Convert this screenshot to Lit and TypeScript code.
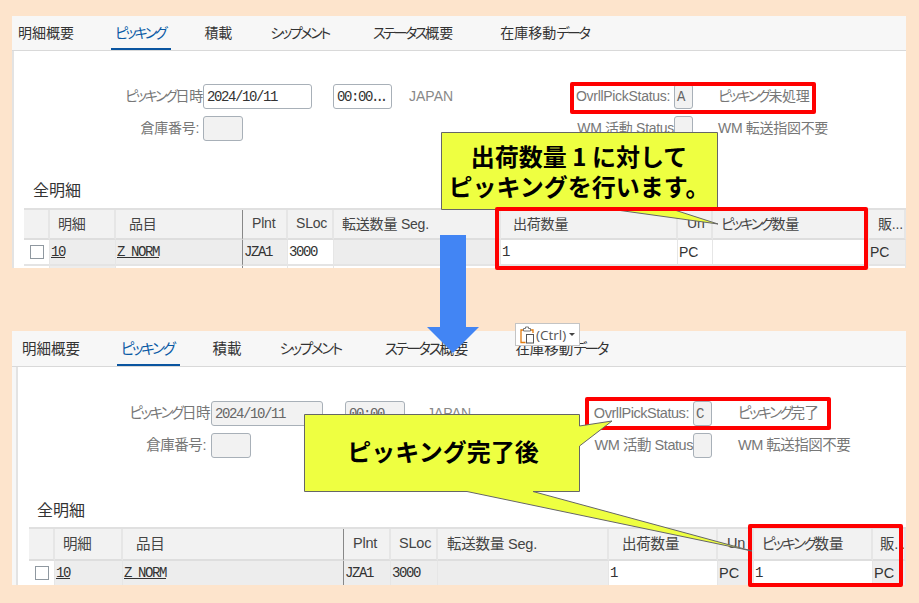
import { LitElement, html, css, svg } from "lit";
import { customElement, property } from "lit/decorators.js";

interface Col { w: number; head: string; pad: number; val?: string; link?: boolean; mono?: boolean; shade: boolean; next: boolean; frozen?: boolean; check?: boolean; }
interface Cfg {
  variant: string; active: string; date: string; time: string; timeMore: boolean; dateOff: boolean;
  status: string; statusText: string; cols: Col[];
}

const TABS = ["明細概要", "ピッキング", "積載", "シップメント", "ステータス概要", "在庫移動データ"];

const cols = (w: number[], p: number[], sloc: boolean, un: boolean, qty: string, pick: string): Col[] => [
  { w: w[0], head: "", pad: 0, check: true, shade: false, next: false },
  { w: w[1], head: "明細", pad: p[0], val: "10", link: true, mono: true, shade: true, next: true },
  { w: w[2], head: "品目", pad: p[1], val: "Z_NORM", link: true, mono: true, shade: true, next: false, frozen: true },
  { w: w[3], head: "Plnt", pad: p[2], val: "JZA1", mono: true, shade: true, next: false },
  { w: w[4], head: "SLoc", pad: p[3], val: "3000", mono: true, shade: sloc, next: false },
  { w: w[5], head: "転送数量 Seg.", pad: p[4], shade: true, next: false },
  { w: w[6], head: "出荷数量", pad: p[5], val: qty, mono: true, shade: false, next: false },
  { w: w[7], head: "Un", pad: p[6], val: "PC", shade: un, next: false },
  { w: w[8], head: "ピッキング数量", pad: p[7], val: pick, mono: true, shade: false, next: false },
  { w: w[9], head: "販...", pad: p[8], val: "PC", shade: true, next: false },
];

const TOP: Cfg = {
  variant: "p1", active: "ピッキング", date: "2024/10/11", time: "00:00", timeMore: true, dateOff: false,
  status: "A", statusText: "ピッキング未処理",
  cols: cols([26, 66, 127, 45, 46, 167, 177, 35, 156, 37], [8, 13, 9, 8, 8, 12, 9, 8, 9], false, false, "1", ""),
};
const BOTTOM: Cfg = {
  variant: "p2", active: "ピッキング", date: "2024/10/11", time: "00:00", timeMore: false, dateOff: true,
  status: "C", statusText: "ピッキング完了",
  cols: cols([26, 68, 221, 47, 47, 171, 109, 36, 119, 33], [8, 13, 9, 8, 9, 13, 9, 8, 7], true, true, "1", "1"),
};

/* Katakana is set tighter than the rest, as in the reference's UI font. */
const jp = (text: string) =>
  text.split(/([\u30A0-\u30FF]+)/).map((part, i) => (i % 2 ? html`<span class="ka">${part}</span>` : part));

@customElement("detail-panel")
export class DetailPanel extends LitElement {
  @property({ attribute: false }) cfg: Cfg = TOP;

  static styles = css`
    :host { display: block; overflow: hidden; background: #f7f7f7; color: #444;
      font-family: "Liberation Sans", "Noto Sans CJK JP", sans-serif; font-size: 14px; }
    .ka { font-feature-settings: "palt"; letter-spacing: -2.3px; }
    .tabs { display: flex; background: #f7f7f7; border-bottom: 1px solid #d9d9d9; box-sizing: border-box; gap: 33px; padding-left: 2px; }
    .tab { padding: 0 4px; height: 100%; display: flex; align-items: center; box-sizing: border-box; color: #333; white-space: nowrap; border-bottom: 2px solid transparent; margin-bottom: -1px; }
    .tab.on { color: #0a5aa5; border-bottom-color: #0a55a0; padding-right: 6px; }
    .tab:nth-child(3) { margin-left: -4px; }
    .tab:nth-child(4) { margin-left: -3px; }
    .tab:nth-child(5) { margin-left: 3px; }
    .tab:nth-child(6) { margin-left: 6px; }
    .p1 .tabs { height: 35px; }
    .p2 .tabs { height: 36px; padding-left: 6px; }
    .p2 { font-size: 14.5px; }
    .body { border-left: 2px solid #e3e3e3; background: #fff; height: 240px; }
    .p1 .body { padding: 33px 0 0 10px; }
    .p2 .body { margin-left: 4px; padding: 34px 0 0 11px; }
    .form { display: grid; row-gap: 7px; align-items: center; color: #777; margin-left: -10px; }
    .p1 .form { grid-template-columns: 189px 109px 21px 59px 17px 131px 134px 19px 25px 1fr; grid-auto-rows: 25px; }
    .p2 .form { grid-template-columns: 193px 112px 22px 60px 22px 110px 156px 19px 26px 1fr; grid-auto-rows: 25px; margin-left: -11px; }
    .label { text-align: right; white-space: nowrap; letter-spacing: -0.3px; line-height: 20px; position: relative; top: -1px; }
    .p2 .label { letter-spacing: -0.45px; }
    .p2 .l1 { padding-right: 1px; }
    .p2 .l1.pr { padding-right: 5px; }
    .pr { padding-right: 4px; }
    .input { box-sizing: border-box; height: 25px; border: 1px solid #a8b0b8; border-radius: 3px; background: #fff; color: #333; padding: 0 3px; display: flex; align-items: center;
      font-family: "Liberation Mono", monospace; font-size: 14px; letter-spacing: -1.4px; white-space: nowrap; overflow: hidden; }
    .off { background: #f2f2f2; color: #666; }
    .short { width: 40px; }
    .dots { letter-spacing: -4px; margin-left: -1px; }
    .c2 { grid-column: 2; } .c4 { grid-column: 4; } .c6 { grid-column: 6; }
    .c7 { grid-column: 7; } .c8 { grid-column: 8; padding: 0 2px; } .c10 { grid-column: 10; }
    .l1 { grid-column: 1; }
    .note { white-space: nowrap; line-height: 20px; position: relative; top: -1px; letter-spacing: -0.3px; }
    .p2 .note { letter-spacing: -0.5px; }
    .jpn { color: #888; font-size: 14px; line-height: 20px; position: relative; top: -1px; }
    .heading { font-size: 16px; color: #333; line-height: 20px; }
    .p1 .heading { margin-top: 40px; margin-bottom: 7px; padding-left: 9px; }
    .p2 .heading { margin-top: 43px; margin-bottom: 6px; padding-left: 8px; }
    .grid { display: grid; border-top: 2px solid #e0e0e0; }
    .h { background: #f2f2f2; display: flex; align-items: center; border-right: 2px solid #e6e6e6; border-bottom: 2px solid #dedede; white-space: nowrap; overflow: hidden; color: #444; letter-spacing: -0.2px; box-sizing: content-box; }
    .p1 .h { height: 25px; padding-bottom: 3px; }
    .p2 .h { height: 27px; padding-bottom: 3px; }
    .d { height: 24px; display: flex; align-items: center; padding-left: 1px; border-right: 1px solid #e6e6e6; border-bottom: 2px solid #e4e4e4; background: #fff; color: #333; white-space: nowrap; overflow: hidden; }
    .shade { background: #ededed; }
    .n { height: 20px; background: #fff; border-right: 1px solid #e6e6e6; }
    .n.g { background: #ededed; }
    .frozen { border-right: 1px solid #888; }
    .mono { font-family: "Liberation Mono", monospace; letter-spacing: -1.4px; font-size: 14px; }
    .link { text-decoration: underline; }
    .box { width: 14px; height: 14px; box-sizing: border-box; border: 1px solid #8f98a0; background: #fff; margin-left: 5px; }
  `;

  render() {
    const c = this.cfg;
    const tpl = c.cols.map((x) => x.w + "px").join(" ");
    const off = c.dateOff ? "off" : "";
    return html`<div class=${c.variant}>
      <div class="tabs">
        ${TABS.map((t) => html`<div class="tab ${t === c.active ? "on" : ""}">${jp(t)}</div>`)}
      </div>
      <div class="body">
        <div class="form">
          <div class="label l1">${jp("ピッキング日時")}</div>
          <div class="input c2 ${off}">${c.date}</div>
          <div class="input c4 ${off}">${c.time}${c.timeMore ? html`<span class="dots">...</span>` : ""}</div>
          <div class="jpn c6">JAPAN</div>
          <div class="label c7 pr">OvrllPickStatus:</div>
          <div class="input c8 off">${c.status}</div>
          <div class="note c10">${jp(c.statusText)}</div>
          <div class="label l1 pr">倉庫番号:</div>
          <div class="input c2 off short"></div>
          <div class="label c7">WM 活動 Status</div>
          <div class="input c8 off"></div>
          <div class="note c10">WM 転送指図不要</div>
        </div>
        <div class="heading">全明細</div>
        <div class="grid" style="grid-template-columns:${tpl}">
          ${c.cols.map((x) => html`<div class="h ${x.frozen ? "frozen" : ""}" style="padding-left:${x.pad}px">${jp(x.head)}</div>`)}
          ${c.cols.map((x) => html`<div class="d ${x.shade ? "shade" : ""} ${x.frozen ? "frozen" : ""}">
            ${x.check ? html`<div class="box"></div>` : ""}
            ${x.val ? html`<span class="${x.mono ? "mono" : ""} ${x.link ? "link" : ""}">${x.val}</span>` : ""}
          </div>`)}
          ${c.cols.map((x) => html`<div class="n ${x.next ? "g" : ""} ${x.frozen ? "frozen" : ""}"></div>`)}
        </div>
      </div>
    </div>`;
  }
}

@customElement("app-root")
export class AppRoot extends LitElement {
  static styles = css`
    :host { display: block; position: relative; width: 919px; height: 603px; background: #fde4cc; overflow: hidden;
      font-family: "Noto Sans CJK JP", "Noto Sans", sans-serif; }
    .stack { display: flex; flex-direction: column; padding: 16px 13px 0 12px; }
    .top { height: 252px; }
    .bottom { height: 254px; margin-top: 63px; }
    .art { position: absolute; left: 0; top: 0; width: 919px; height: 603px; pointer-events: none; }
    .red { position: absolute; box-sizing: border-box; border: 4px solid #f00; border-radius: 2px; }
    .r1 { left: 570px; top: 82px; width: 246px; height: 32px; }
    .r2 { left: 495px; top: 207px; width: 373px; height: 63px; }
    .r3 { left: 585px; top: 397px; width: 246px; height: 33px; }
    .r4 { left: 748px; top: 524px; width: 155px; height: 63px; }
    .say { position: absolute; color: #000; font-weight: 700; font-size: 24px; line-height: 30px; text-align: center; white-space: nowrap; }
    .s1 { left: 441px; top: 141px; width: 276px; }
    .s2 { left: 304px; top: 436px; width: 278px; }
    .paste { position: absolute; left: 515px; top: 323px; width: 65px; height: 23px; box-sizing: border-box; background: #fff; border: 1px solid #c4c4c4;
      display: flex; align-items: center; gap: 2px; padding-left: 4px; font-family: "Open Sans", "Noto Sans", sans-serif; font-size: 13.5px; color: #555; }
    .caret { width: 0; height: 0; border-left: 3px solid transparent; border-right: 3px solid transparent; border-top: 3px solid #444; margin-left: 1px; }
  `;

  render() {
    return html`
      <div class="stack">
        <detail-panel class="top" .cfg=${TOP}></detail-panel>
        <detail-panel class="bottom" .cfg=${BOTTOM}></detail-panel>
      </div>
      <div class="red r3"></div>
      <div class="red r4"></div>
      <svg class="art" viewBox="0 0 919 603">
        ${svg`<path d="M440 235H466V327H479L453 353L427 327H440Z" fill="#4285f4"/>`}
        ${svg`<path d="M441.5 132.5H717.5V209.5H673L718 224L613 209.5H441.5Z" fill="#eeff41" stroke="#666" stroke-width="1"/>`}
        ${svg`<path d="M304.5 414.5H579.5V426L612 421L579.5 446V491.5H533L752 551L467 491.5H304.5Z" fill="#eeff41" stroke="#666" stroke-width="1"/>`}
      </svg>
      <div class="red r1"></div>
      <div class="red r2"></div>
      <div class="say s1">出荷数量 1 に対して<br />ピッキングを行います。</div>
      <div class="say s2">ピッキング完了後</div>
      <div class="paste">
        <svg width="14" height="18" viewBox="0 0 14 18">
          <path d="M3.5 4H1V16.5H5.5M10.5 4H13V7" fill="none" stroke="#e07b10" stroke-width="1.3"/>
          <path d="M3.5 5V2.5H5.5V1H8.5V2.5H10.5V5Z" fill="#fff" stroke="#777" stroke-width="1"/>
          <rect x="6.5" y="8.5" width="7" height="8.5" fill="#fff" stroke="#555" stroke-width="1"/>
        </svg>
        <span>(Ctrl)</span>
        <span class="caret"></span>
      </div>
    `;
  }
}
